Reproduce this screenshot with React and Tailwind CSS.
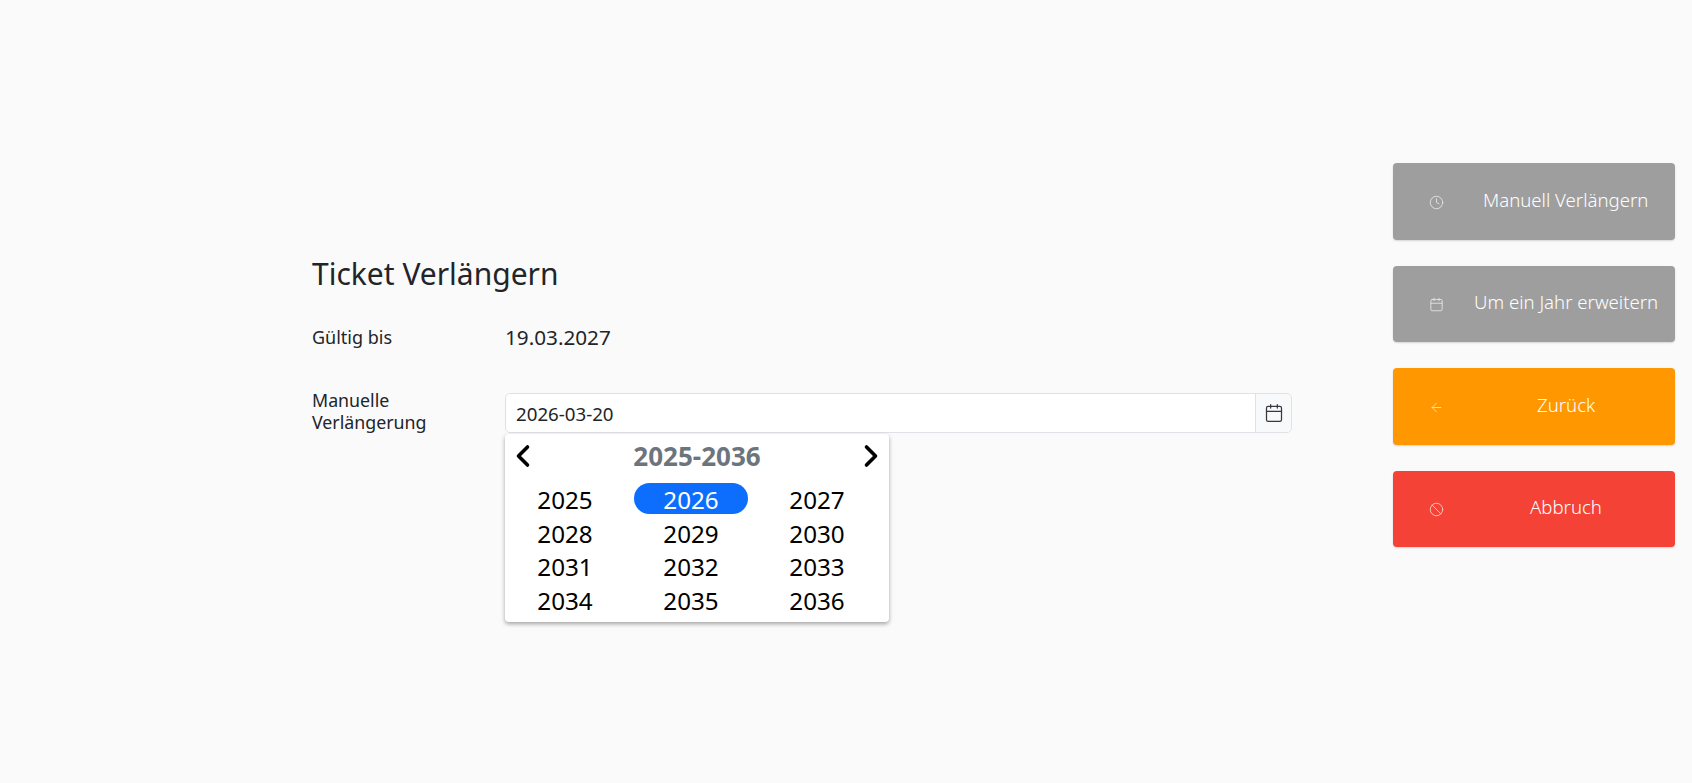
import React from "react";
import { ArrowLeft, Ban, Calendar, ChevronLeft, ChevronRight, Clock } from "lucide-react";

const YEARS = [2025, 2026, 2027, 2028, 2029, 2030, 2031, 2032, 2033, 2034, 2035, 2036];

const ACTIONS = [
  { label: "Manuell Verlängern", Icon: Clock, color: "bg-[#9e9e9e]", textClass: "pl-[39px]" },
  { label: "Um ein Jahr erweitern", Icon: Calendar, color: "bg-[#9e9e9e]", textClass: "pl-[30px]" },
  { label: "Zurück", Icon: ArrowLeft, color: "bg-[#ff9800]", textClass: "pl-[93px]" },
  { label: "Abbruch", Icon: Ban, color: "bg-[#f44336]", textClass: "pl-[86px]" },
];

const YearPicker = () => (
  <div className="absolute left-0 top-[41px] z-10 h-[188px] w-[384px] rounded-[4px] bg-white shadow-[0_2px_4px_rgba(0,0,0,0.35)]">
    <div className="flex h-[44px] items-center justify-between">
      <ChevronLeft size={36} strokeWidth={2.4} className="text-black" />
      <span className="text-[26px] font-bold text-[#6c757d]">2025-2036</span>
      <ChevronRight size={36} strokeWidth={2.4} className="text-black" />
    </div>
    <div className="ml-[-3px] mt-[5px] grid w-[378px] grid-cols-3">
      {YEARS.map((y) => (
        <div key={y} className="flex h-[33.6px] items-start justify-center px-[6px]">
          <span
            className={`block h-[31px] w-full rounded-[16px] text-center text-[24.2px] leading-[33px] ${
              y === 2026 ? "bg-[#0d6efd] text-white" : "text-black"
            }`}
          >
            {y}
          </span>
        </div>
      ))}
    </div>
  </div>
);

const App = () => {
  return (
    <div className="flex h-[783px] w-[1692px] overflow-hidden bg-[#fafafa] font-['Noto_Sans',sans-serif] text-[#212529]">
      <main className="w-[1393px] pl-[312px] pt-[253px]">
        <h1 className="text-[30px] leading-[42px]">Ticket Verlängern</h1>

        <div className="mt-[27px] flex items-center">
          <div className="w-[193px] text-[18px]">Gültig bis</div>
          <div className="text-[20.7px] leading-[30px]">19.03.2027</div>
        </div>

        <div className="mt-[41px] flex">
          <div className="-mt-[3px] w-[193px] text-[17.8px] leading-[21.6px]">
            Manuelle
            <br />
            Verlängerung
          </div>
          <div className="relative w-[787px]">
            <div className="flex h-[40px] rounded-[5px] border border-[#dee2e6] bg-white">
              <div className="flex-1 pl-[10px] text-[18.7px] leading-[40px]">2026-03-20</div>
              <div className="flex w-[36px] items-center justify-center rounded-r-[5px] border-l border-[#dee2e6] bg-[#f8f9fa]">
                <Calendar size={20} strokeWidth={1.5} className="text-[#343a40]" />
              </div>
            </div>
            <YearPicker />
          </div>
        </div>
      </main>

      <aside className="flex w-[282px] flex-col gap-[26px] pt-[163px]">
        {ACTIONS.map(({ label, Icon, color, textClass }) => (
          <button
            key={label}
            className={`flex h-[76.5px] items-center rounded-[4px] pl-[36px] text-[18.6px] font-light text-white shadow-[0_1px_2px_rgba(0,0,0,0.15)] ${color}`}
          >
            <Icon size={15} strokeWidth={1.5} className="mt-[2px] shrink-0 opacity-70" />
            <span className={`mb-[3px] whitespace-nowrap ${textClass}`}>{label}</span>
          </button>
        ))}
      </aside>
    </div>
  );
};

export default App;
